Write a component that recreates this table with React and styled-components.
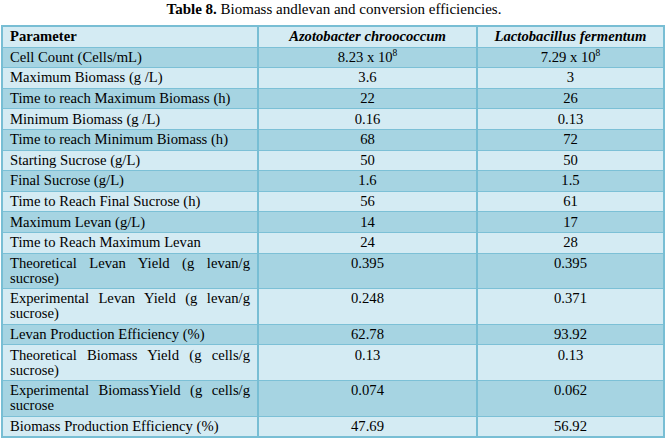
import React from 'react';
import styled, { createGlobalStyle } from 'styled-components';

const GlobalStyle = createGlobalStyle`
  html, body {
    margin: 0;
    padding: 0;
    background: #ffffff;
  }
  body {
    font-family: "Liberation Serif", "Times New Roman", serif;
    color: #000;
  }
`;

const Page = styled.div`
  width: 668px;
  padding: 1px 3px 0 1px;
  box-sizing: border-box;
`;

const Caption = styled.div`
  font-family: "Liberation Serif", "Times New Roman", serif;
  font-size: 15px;
  line-height: 17px;
  text-align: center;
  height: 24px;
  padding-left: 2px;
  color: #000;

  b {
    font-weight: bold;
  }
`;

const Table = styled.table`
  width: 664px;
  border-collapse: collapse;
  table-layout: fixed;
  border: 2px solid #78bed4;
  font-family: "Liberation Serif", "Times New Roman", serif;
  font-size: 14.67px;
  line-height: 15px;
  color: #000;
`;

const Row = styled.tr`
  background: ${(p) => (p.$dark ? '#a6d4e2' : '#d4ebf3')};
`;

const Cell = styled.td`
  font-family: "Liberation Serif", "Times New Roman", serif;
  font-size: 14.67px;
  line-height: 15px;
  color: #000;
  padding: 2.3px 7px 2.3px 7px;
  border-top: 1px solid #7cc0d6;
  border-right: 2px solid #78bed4;
  vertical-align: top;
  text-align: ${(p) => (p.$label ? 'justify' : 'center')};
  font-weight: ${(p) => (p.$head ? 'bold' : 'normal')};
  font-style: ${(p) => (p.$italic ? 'italic' : 'normal')};

  &:last-child {
    border-right: none;
  }

  sup {
    font-size: 9.5px;
    line-height: 0;
    vertical-align: 6px;
  }
`;

const rows = [
  ['Cell Count (Cells/mL)', <>8.23 x 10<sup>8</sup></>, <>7.29 x 10<sup>8</sup></>],
  ['Maximum Biomass (g /L)', '3.6', '3'],
  ['Time to reach Maximum Biomass (h)', '22', '26'],
  ['Minimum Biomass (g /L)', '0.16', '0.13'],
  ['Time to reach Minimum Biomass (h)', '68', '72'],
  ['Starting Sucrose (g/L)', '50', '50'],
  ['Final Sucrose (g/L)', '1.6', '1.5'],
  ['Time to Reach Final Sucrose (h)', '56', '61'],
  ['Maximum Levan (g/L)', '14', '17'],
  ['Time to Reach Maximum Levan', '24', '28'],
  ['Theoretical Levan Yield (g levan/g sucrose)', '0.395', '0.395'],
  ['Experimental Levan Yield (g levan/g sucrose)', '0.248', '0.371'],
  ['Levan Production Efficiency (%)', '62.78', '93.92'],
  ['Theoretical Biomass Yield (g cells/g sucrose)', '0.13', '0.13'],
  ['Experimental BiomassYield (g cells/g sucrose', '0.074', '0.062'],
  ['Biomass Production Efficiency (%)', '47.69', '56.92'],
];

export default function App() {
  return (
    <Page>
      <GlobalStyle />
      <Caption>
        <b>Table 8.</b> Biomass andlevan and conversion efficiencies.
      </Caption>
      <Table>
        <colgroup>
          <col style={{ width: 256 }} />
          <col style={{ width: 219 }} />
          <col />
        </colgroup>
        <tbody>
          <Row>
            <Cell $head $label>Parameter</Cell>
            <Cell $head $italic>Azotobacter chroococcum</Cell>
            <Cell $head $italic>Lactobacillus fermentum</Cell>
          </Row>
          {rows.map(([label, a, b], i) => (
            <Row key={i} $dark={i % 2 === 0}>
              <Cell $label>{label}</Cell>
              <Cell>{a}</Cell>
              <Cell>{b}</Cell>
            </Row>
          ))}
        </tbody>
      </Table>
    </Page>
  );
}
